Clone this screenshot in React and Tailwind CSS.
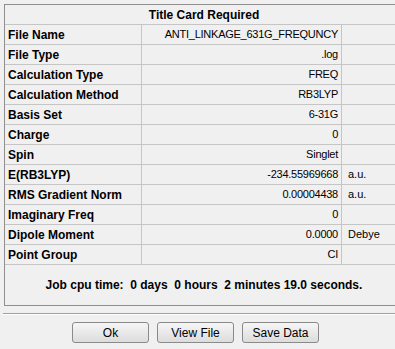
import React from "react";

const rows = [
    { label: "File Name", value: "ANTI_LINKAGE_631G_FREQUNCY", unit: "" },
    { label: "File Type", value: ".log", unit: "" },
    { label: "Calculation Type", value: "FREQ", unit: "" },
    { label: "Calculation Method", value: "RB3LYP", unit: "" },
    { label: "Basis Set", value: "6-31G", unit: "" },
    { label: "Charge", value: "0", unit: "" },
    { label: "Spin", value: "Singlet", unit: "" },
    { label: "E(RB3LYP)", value: "-234.55969668", unit: "a.u." },
    { label: "RMS Gradient Norm", value: "0.00004438", unit: "a.u." },
    { label: "Imaginary Freq", value: "0", unit: "" },
    { label: "Dipole Moment", value: "0.0000", unit: "Debye" },
    { label: "Point Group", value: "CI", unit: "" },
];

const App = () => {
    return (
        <div className="w-[395px] h-[349px] overflow-hidden bg-[#f0f0f0] text-black font-['Liberation_Sans',Arial,sans-serif]">
            <div className="pt-[4px] pl-[4px]">
                <div className="w-[400px] border border-[#8f8f8f]">
                    <div className="h-[20px] border-b border-[#c5c5c5] flex items-center justify-center text-[12px] font-bold">
                        Title Card Required
                    </div>
                    {rows.map((row) => (
                        <div key={row.label} className="h-[20px] border-b border-[#c5c5c5] flex">
                            <div className="w-[137px] border-r border-[#c5c5c5] pl-[3px] flex items-center text-[12px] font-bold whitespace-nowrap">
                                {row.label}
                            </div>
                            <div className="w-[200px] border-r border-[#c5c5c5] pr-[3px] flex items-center justify-end text-[11px] tracking-[-0.25px] whitespace-nowrap">
                                {row.value}
                            </div>
                            <div className="flex-1 pl-[6px] flex items-center text-[11px]">
                                {row.unit}
                            </div>
                        </div>
                    ))}
                    <div className="h-[40px] flex items-center justify-center text-[12px] font-bold whitespace-pre">
                        {"Job cpu time:  0 days  0 hours  2 minutes 19.0 seconds."}
                    </div>
                </div>
            </div>
            <div className="mt-[7px] ml-[3px] w-[395px] border-t border-[#a0a0a0] border-b border-b-white" />
            <div className="mt-[7px] flex pl-[72px] gap-[8px]">
                {["Ok", "View File", "Save Data"].map((label) => (
                    <button
                        key={label}
                        className="w-[77px] h-[21px] rounded-[3px] border border-[#8a8a8a] bg-gradient-to-b from-[#f6f6f6] to-[#dcdcdc] text-[12px] leading-none"
                    >
                        {label}
                    </button>
                ))}
            </div>
        </div>
    );
};

export default App;
